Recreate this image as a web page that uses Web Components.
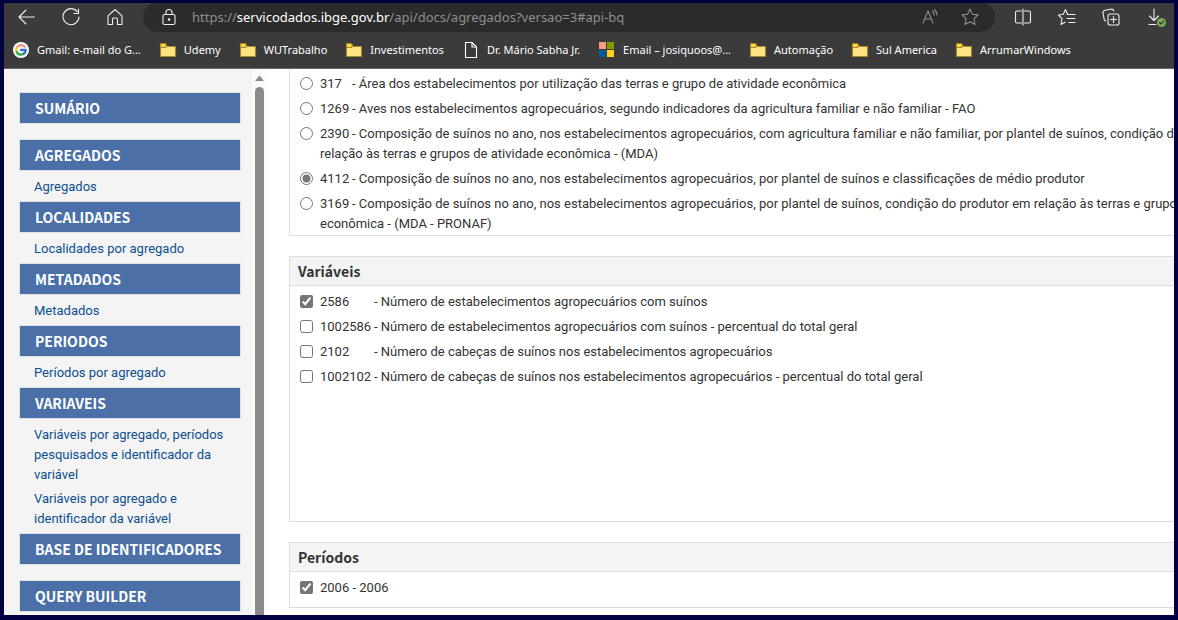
<!DOCTYPE html>
<html lang="pt-BR">
<head>
<meta charset="utf-8">
<title>API de agregados - IBGE</title>
<style>
  html, body { margin: 0; height: 100%; }
  body { background: #000040; overflow: hidden; font-family: Roboto, "Noto Sans", sans-serif; }
</style>
</head>
<body>
<browser-window></browser-window>
<script>
const define = (name, html, setup) => {
  const template = document.createElement('template');
  template.innerHTML = html;
  customElements.define(name, class extends HTMLElement {
    constructor() {
      super();
      this.attachShadow({ mode: 'open' }).append(template.content.cloneNode(true));
    }
    connectedCallback() { if (setup) setup(this, this.shadowRoot); }
  });
};

const ICONS = {
  back: '<path d="M19.5 12H4.500M11 5L4 12l7 7"/>',
  reload: '<path d="M18.200 6.600A8 8 0 1 0 20 12M19.500 4v4.500H15"/>',
  home: '<path d="M5 10.800 12 4.500l7 6.300V19.500h-4.500V14a1 1 0 0 0-1-1h-3a1 1 0 0 0-1 1v5.500H5z"/>',
  lock: '<rect x="6" y="9.500" width="12" height="10" rx="1.500"/><path d="M9 9.500V7.500a3 3 0 0 1 6 0v2"/><circle cx="12" cy="14.500" r=".8" fill="currentColor"/>',
  read: '<path d="M5 18 10 6l5 12M6.800 14h6.400M14.500 6a5 5 0 0 1 1.500 4M16.500 4.500A8 8 0 0 1 19 10"/>',
  star: '<path d="m12 4 2.400 5.200 5.600.7-4.100 3.900 1.100 5.700-5-2.800-5 2.800 1.100-5.700L4 9.900l5.600-.7z"/>',
  split: '<path d="M10.500 6H6a1.500 1.500 0 0 0-1.500 1.500v9A1.500 1.500 0 0 0 6 18h4.500M13.500 6H18a1.500 1.500 0 0 1 1.500 1.500v9A1.500 1.500 0 0 1 18 18h-4.500M12 4v16"/>',
  favorites: '<path d="M12.500 9.500 10.500 4.500 8.300 9.300 3.500 10l3.500 3.700-1 5.800 4-2.300M12.500 9.500h7.500M12 13.500h8M14 17.500h6"/>',
  collections: '<rect x="9" y="9" width="11" height="11" rx="2"/><path d="M14.500 11.500v6M11.500 14.500h6M6.500 16A3 3 0 0 1 5 13.500L4 8a2.500 2.500 0 0 1 2-2.800l6-1a2.500 2.500 0 0 1 2.800 1.800"/>',
  download: '<path d="M11 4v11M6.500 11l4.500 4.500 4.500-4.500M6 19.500h7"/><circle cx="18.500" cy="17.500" r="4.500" fill="#7fa65a" stroke="none"/><path d="m16.500 17.500 1.500 1.500 2.700-3" stroke="#26331c"/>',
  folder: '<g stroke="#a3892a"><path d="M4.500 6.500h5l2 2h8v10h-15z" fill="#ffe383"/><path d="M4.500 5.500h5l1 2-1 2h-5z" fill="#ffd83d"/></g>',
  page: '<path d="M6.500 4.500h6.500l4.500 4.500v10.500h-11zM13 4.500V9h4.500"/>',
  google: '<circle cx="12" cy="12" r="8" fill="#fff" stroke="none"/><g fill="none" stroke-width="2.400"><path d="M15.600 8.800A4.700 4.700 0 0 0 7.900 9.700" stroke="#f09090"/><path d="M7.900 9.700a4.700 4.700 0 0 0 0 4.600" stroke="#f5c32c"/><path d="M7.900 14.300a4.700 4.700 0 0 0 7 1.300" stroke="#34a853"/><path d="M14.900 15.600A4.700 4.700 0 0 0 16.700 12H12" stroke="#3b6fd8"/></g>',
  microsoft: '<g stroke="none"><path d="M4 4h7v7H4z" fill="#f89c82"/><path d="M12 4h7v7h-7z" fill="#7f9b00"/><path d="M4 12h7v7H4z" fill="#005a9e"/><path d="M12 12h7v7h-7z" fill="#ffd21c"/></g>'
};

define('ui-icon', `
  <style>
    :host { display: block; width: 24px; height: 24px; flex: none; }
    svg { display: block; fill: none; stroke: currentColor; stroke-width: 1.1; stroke-linejoin: round; stroke-linecap: round; }
  </style>
  <svg width="24" height="24" viewBox="0 0 24 24" aria-hidden="true"></svg>`,
  (el, root) => { root.querySelector('svg').innerHTML = ICONS[el.getAttribute('name')]; });

define('tool-button', `
  <style>
    :host { display: block; flex: none; width: 44px; color: #eee; }
    :host([quiet]) { width: 40px; color: #8f8f8f; }
    button { all: unset; display: flex; justify-content: center; width: 100%; }
  </style>
  <button type="button"><ui-icon></ui-icon></button>`,
  (el, root) => {
    root.querySelector('button').setAttribute('aria-label', el.getAttribute('label'));
    const icon = document.createElement('ui-icon');
    icon.setAttribute('name', el.getAttribute('icon'));
    root.querySelector('ui-icon').replaceWith(icon);
  });

define('address-bar', `
  <style>
    :host { display: flex; align-items: center; flex: 1; min-width: 0; height: 30px; margin: 0 6px; padding: 0 5px 0 6px;
      box-sizing: border-box; border-radius: 15px; background: #2b2b2b; font: 13px/20px "Noto Sans", sans-serif; color: #8f8f8f; }
    .url { flex: 1; white-space: nowrap; overflow: hidden; padding-left: 3px; }
    ::slotted(b) { font-weight: 400; color: #fff; }
    .lock { color: #eee; }
  </style>
  <tool-button class="lock" quiet icon="lock" label="Informações do site"></tool-button>
  <div class="url"><slot></slot></div>
  <tool-button quiet icon="read" label="Ler em voz alta"></tool-button>
  <tool-button quiet icon="star" label="Adicionar aos favoritos"></tool-button>`);

define('bookmark-link', `
  <style>
    :host { display: block; flex: none; }
    a { display: flex; align-items: center; gap: 4px; color: #fff; text-decoration: none; font: 11px/20px "Noto Sans", sans-serif; white-space: nowrap; }
  </style>
  <a href="#"><ui-icon></ui-icon><span><slot></slot></span></a>`,
  (el, root) => {
    const icon = document.createElement('ui-icon');
    icon.setAttribute('name', el.getAttribute('icon'));
    root.querySelector('ui-icon').replaceWith(icon);
  });

define('browser-chrome', `
  <style>
    :host { display: block; flex: none; background: #3b3b3b; border-bottom: 1px solid #6a6a6a; overflow: hidden; }
    .tools { display: flex; align-items: center; height: 28px; padding-left: 1px; margin-right: -3px; }
    .marks { display: flex; align-items: center; gap: 15px; height: 37px; padding-left: 5px; }
  </style>
  <div class="tools">
    <tool-button icon="back" label="Voltar"></tool-button>
    <tool-button icon="reload" label="Atualizar"></tool-button>
    <tool-button icon="home" label="Página inicial"></tool-button>
    <address-bar>https://<b>servicodados.ibge.gov.br</b>/api/docs/agregados?versao=3#api-bq</address-bar>
    <tool-button icon="split" label="Dividir tela"></tool-button>
    <tool-button icon="favorites" label="Favoritos"></tool-button>
    <tool-button icon="collections" label="Coleções"></tool-button>
    <tool-button icon="download" label="Downloads"></tool-button>
  </div>
  <nav class="marks" aria-label="Favoritos">
    <bookmark-link icon="google">Gmail: e-mail do G...</bookmark-link>
    <bookmark-link icon="folder">Udemy</bookmark-link>
    <bookmark-link icon="folder">WUTrabalho</bookmark-link>
    <bookmark-link icon="folder">Investimentos</bookmark-link>
    <bookmark-link icon="page">Dr. Mário Sabha Jr.</bookmark-link>
    <bookmark-link icon="microsoft">Email – josiquoos@...</bookmark-link>
    <bookmark-link icon="folder">Automação</bookmark-link>
    <bookmark-link icon="folder">Sul America</bookmark-link>
    <bookmark-link icon="folder">ArrumarWindows</bookmark-link>
  </nav>`);

define('menu-section', `
  <style>
    :host { display: block; }
    :host([empty]) { margin-bottom: 15px; }
    h2 { margin: 0; padding: 0 15px; border: 1px solid #e0e0e0; background: #4b70a8; color: #fff;
      font: 700 14px/30px "Noto Sans CJK SC", "Noto Sans", sans-serif; white-space: nowrap; }
    .links { display: flex; flex-direction: column; gap: 4px; padding: 6px 10px 4px 15px; }
    :host([empty]) .links { display: none; }
    ::slotted(a) { color: #0b4f8e; text-decoration: none; font-size: 13px; line-height: 20px; }
  </style>
  <h2></h2>
  <div class="links"><slot></slot></div>`,
  (el, root) => { root.querySelector('h2').textContent = el.getAttribute('heading'); });

define('side-menu', `
  <style>
    :host { display: flex; flex: none; width: 263px; background: #f4f4f4; }
    nav { flex: 1; padding: 23px 11px 0 15px; }
    .track { display: flex; flex-direction: column; align-items: center; width: 15px; background: #fafafa; }
    .track svg { display: block; flex: none; margin: 6px 0; }
    .thumb { flex: 1; width: 9px; border-radius: 5px 5px 0 0; background: #8b8b8b; }
  </style>
  <nav aria-label="Sumário">
    <menu-section heading="SUMÁRIO" empty></menu-section>
    <menu-section heading="AGREGADOS"><a href="#">Agregados</a></menu-section>
    <menu-section heading="LOCALIDADES"><a href="#">Localidades por agregado</a></menu-section>
    <menu-section heading="METADADOS"><a href="#">Metadados</a></menu-section>
    <menu-section heading="PERIODOS"><a href="#">Períodos por agregado</a></menu-section>
    <menu-section heading="VARIAVEIS">
      <a href="#">Variáveis por agregado, períodos pesquisados e identificador da variável</a>
      <a href="#">Variáveis por agregado e identificador da variável</a>
    </menu-section>
    <menu-section heading="BASE DE IDENTIFICADORES" empty></menu-section>
    <menu-section heading="QUERY BUILDER" empty></menu-section>
  </nav>
  <div class="track">
    <svg width="9" height="6" viewBox="0 0 9 6" aria-hidden="true"><path d="M0 6 4.500.5 9 6z" fill="#8b8b8b"/></svg>
    <div class="thumb"></div>
  </div>`);

define('option-row', `
  <style>
    :host { display: block; }
    label { display: flex; align-items: flex-start; gap: 7px; font-size: 13px; line-height: 20px; color: #333; white-space: nowrap; }
    input { flex: none; width: 13px; height: 13px; margin: 3px 0 0; accent-color: #757575; }
    .code { display: inline-block; width: var(--code-width, auto); }
    .code:empty { display: none; }
  </style>
  <label><input><span><span class="code"></span><slot></slot></span></label>`,
  (el, root) => {
    const input = root.querySelector('input');
    input.type = el.getAttribute('type') || 'checkbox';
    input.checked = el.hasAttribute('checked');
    root.querySelector('.code').textContent = el.getAttribute('code') || '';
  });

define('option-panel', `
  <style>
    :host { display: block; border: 1px solid #dedede; border-right: 0; background: #fff; }
    h3 { margin: 0; padding: 0 8px; border-bottom: 1px solid #dedede; background: #f4f4f4; color: #333;
      font: 700 14px/28px "Noto Sans CJK SC", "Noto Sans", sans-serif; }
    .rows { display: flex; flex-direction: column; gap: 5px; padding: 6px 0 9px 10px; }
    :host([tall]) .rows { min-height: 220px; }
    :host([continued]) { border-top: 0; }
    :host([continued]) h3 { display: none; }
    :host([continued]) .rows { padding: 5px 0 1px 10px; }
  </style>
  <h3></h3>
  <div class="rows"><slot></slot></div>`,
  (el, root) => { root.querySelector('h3').textContent = el.getAttribute('heading') || ''; });

define('query-builder', `
  <style>
    :host { display: flex; flex-direction: column; gap: 20px; flex: 1; min-width: 0; padding-left: 22px; overflow: hidden; background: #fff; }
    .tables { --code-width: 32px; }
    .variables { --code-width: 54px; }
  </style>
  <option-panel class="tables" continued>
    <option-row type="radio" code="317">- Área dos estabelecimentos por utilização das terras e grupo de atividade econômica</option-row>
    <option-row type="radio" code="1269">- Aves nos estabelecimentos agropecuários, segundo indicadores da agricultura familiar e não familiar - FAO</option-row>
    <option-row type="radio" code="2390">- Composição de suínos no ano, nos estabelecimentos agropecuários, com agricultura familiar e não familiar, por plantel de suínos, condição do produtor em<br>relação às terras e grupos de atividade econômica - (MDA)</option-row>
    <option-row type="radio" code="4112" checked>- Composição de suínos no ano, nos estabelecimentos agropecuários, por plantel de suínos e classificações de médio produtor</option-row>
    <option-row type="radio" code="3169">- Composição de suínos no ano, nos estabelecimentos agropecuários, por plantel de suínos, condição do produtor em relação às terras e grupos de atividade<br>econômica - (MDA - PRONAF)</option-row>
  </option-panel>
  <option-panel class="variables" heading="Variáveis" tall>
    <option-row code="2586" checked>- Número de estabelecimentos agropecuários com suínos</option-row>
    <option-row code="1002586">- Número de estabelecimentos agropecuários com suínos - percentual do total geral</option-row>
    <option-row code="2102">- Número de cabeças de suínos nos estabelecimentos agropecuários</option-row>
    <option-row code="1002102">- Número de cabeças de suínos nos estabelecimentos agropecuários - percentual do total geral</option-row>
  </option-panel>
  <option-panel heading="Períodos">
    <option-row checked>2006 - 2006</option-row>
  </option-panel>`);

define('browser-window', `
  <style>
    :host { display: flex; flex-direction: column; height: 100vh; box-sizing: border-box; border: solid #000040; border-width: 3px 4px 5px; overflow: hidden; }
    main { display: flex; flex: 1; min-height: 0; overflow: hidden; background: #fff; }
  </style>
  <browser-chrome></browser-chrome>
  <main><side-menu></side-menu><query-builder></query-builder></main>`);
</script>
</body>
</html>
